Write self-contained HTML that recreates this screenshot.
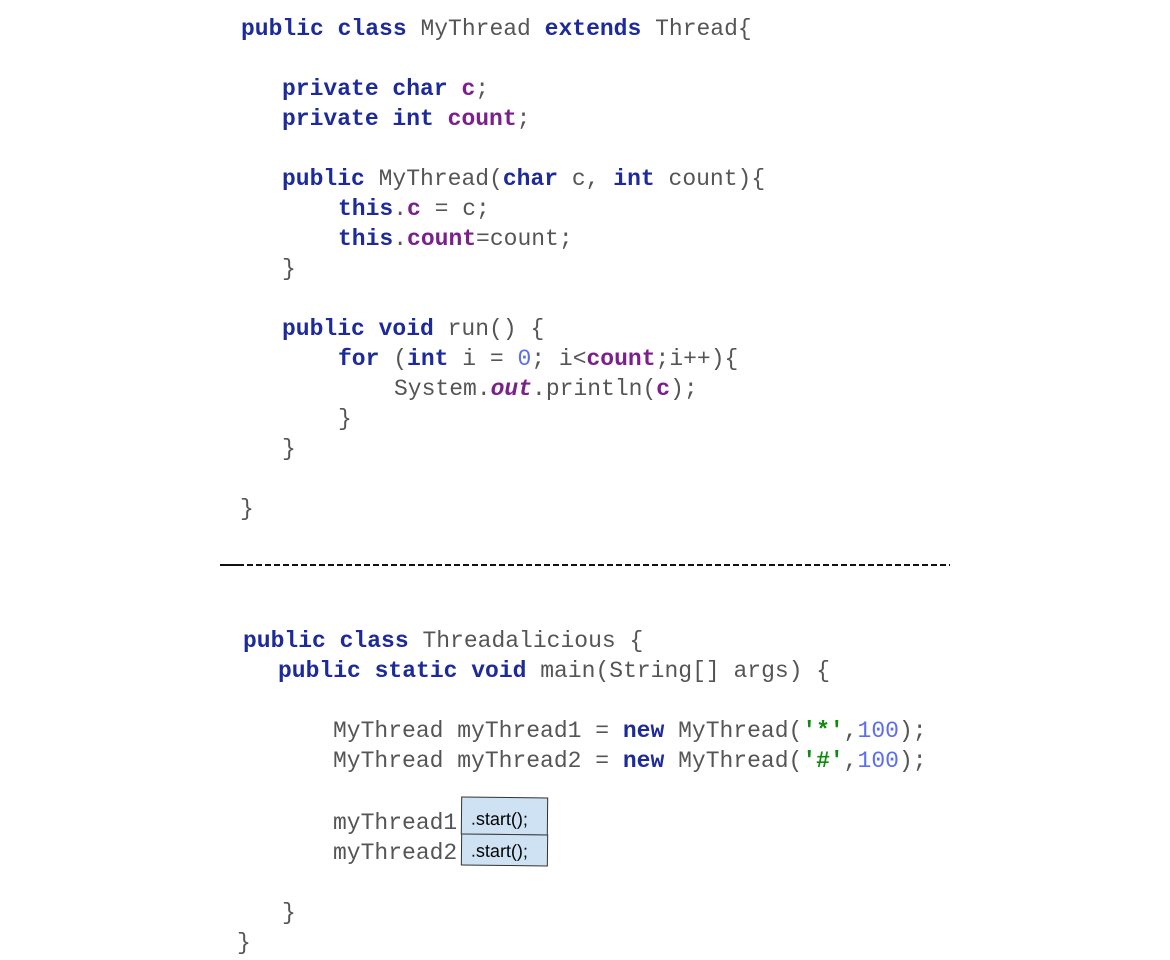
<!DOCTYPE html>
<html><head><meta charset="utf-8"><style>
html,body{margin:0;padding:0;background:#fff;}
body{width:1170px;height:960px;position:relative;overflow:hidden;}
.l{position:absolute;font-family:"Liberation Mono",monospace;font-size:23px;line-height:30px;white-space:pre;color:#555;margin-top:1px;}
.k{color:#1c2a9a;font-weight:bold;}
.f{color:#7a1f8c;font-weight:bold;}
.n{color:#5b6cf5;}
.g{color:#108a10;font-weight:bold;}
.i{font-style:italic;}
.box{position:absolute;background:#cfe2f3;border:1px solid #333;font-family:"Liberation Sans",sans-serif;font-size:18px;color:#000;padding:11px 0 0 9px;box-sizing:border-box;line-height:20px;}
.dash{position:absolute;left:220px;top:564px;height:2px;width:730px;background:repeating-linear-gradient(90deg,#111 0 6px,transparent 6px 9px);}
.solid{position:absolute;left:220px;top:564px;height:2px;width:24px;background:#111;}
</style></head><body>
<div class="l" style="left:241px;top:13px"><span class="k">public class</span> MyThread <span class="k">extends</span> Thread{</div>
<div class="l" style="left:282px;top:73px"><span class="k">private char</span> <span class="f">c</span>;</div>
<div class="l" style="left:282px;top:103px"><span class="k">private int</span> <span class="f">count</span>;</div>
<div class="l" style="left:282px;top:163px"><span class="k">public</span> MyThread(<span class="k">char</span> c, <span class="k">int</span> count){</div>
<div class="l" style="left:338px;top:193px"><span class="k">this</span>.<span class="f">c</span> = c;</div>
<div class="l" style="left:338px;top:223px"><span class="k">this</span>.<span class="f">count</span>=count;</div>
<div class="l" style="left:282px;top:253px">}</div>
<div class="l" style="left:282px;top:313px"><span class="k">public void</span> run() {</div>
<div class="l" style="left:338px;top:343px"><span class="k">for</span> (<span class="k">int</span> i = <span class="n">0</span>; i&lt;<span class="f">count</span>;i++){</div>
<div class="l" style="left:394px;top:373px">System.<span class="f i">out</span>.println(<span class="f">c</span>);</div>
<div class="l" style="left:338px;top:403px">}</div>
<div class="l" style="left:282px;top:433px">}</div>
<div class="l" style="left:240px;top:493px">}</div>
<div class="solid"></div><div class="dash"></div>
<div class="l" style="left:243px;top:625px"><span class="k">public class</span> Threadalicious {</div>
<div class="l" style="left:278px;top:655px"><span class="k">public static void</span> main(String[] args) {</div>
<div class="l" style="left:333px;top:715px">MyThread myThread1 = <span class="k">new</span> MyThread(<span class="g">'*'</span>,<span class="n">100</span>);</div>
<div class="l" style="left:333px;top:745px">MyThread myThread2 = <span class="k">new</span> MyThread(<span class="g">'#'</span>,<span class="n">100</span>);</div>
<div class="l" style="left:333px;top:807px">myThread1    ;</div>
<div class="l" style="left:333px;top:837px">myThread2    ;</div>
<div class="box" style="left:461px;top:797px;width:87px;height:38px;transform:rotate(0.6deg)">.start();</div>
<div class="box" style="left:461px;top:834px;width:87px;height:32px;padding-top:6px;transform:rotate(0.6deg)">.start();</div>
<div class="l" style="left:282px;top:897px">}</div>
<div class="l" style="left:237px;top:927px">}</div>
</body></html>
